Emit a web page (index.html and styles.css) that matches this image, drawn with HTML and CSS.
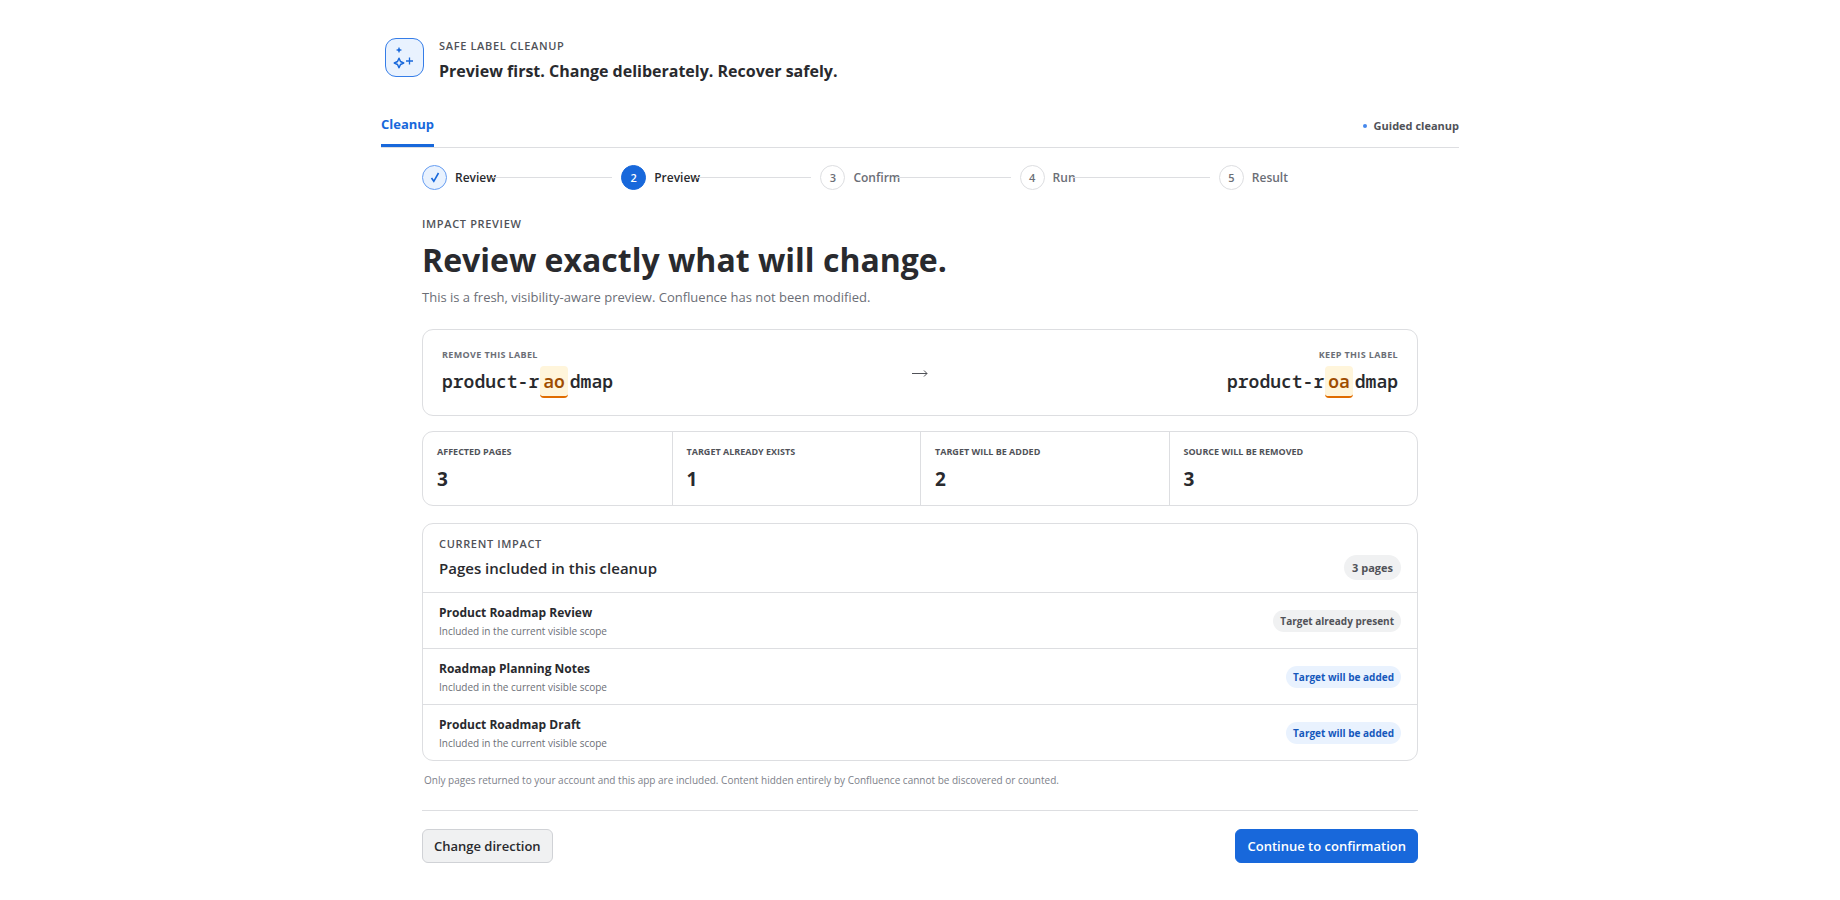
FILE: index.html
```
<!DOCTYPE html>
<html lang="en">
<head>
    <meta charset="UTF-8">
    <meta name="viewport" content="width=device-width, initial-scale=1.0">
    <title>Safe Label Cleanup</title>
    <link rel="stylesheet" href="styles.css">
</head>
<body>
    <div class="shell">
        <header class="app-header">
            <div class="app-icon">
                <svg width="23" height="23" viewBox="0 0 23 23" fill="none" stroke="currentColor" stroke-width="1.5" stroke-linejoin="round" aria-hidden="true">
                    <path d="M6 1.500l.8 1.700 1.700.8-1.700.8-.8 1.700-.8-1.700-1.700-.8 1.700-.8z" fill="currentColor" stroke="none"/>
                    <path d="M6 1.500v5M3.500 4h5" stroke-width="1"/>
                    <path d="M6 12.300l1.500 3.200 3.200 1.500-3.200 1.500L6 21.700l-1.500-3.200L1.300 17l3.200-1.500z"/>
                    <path d="M16.500 11.500v7M13 15h7" stroke-width="1.3"/>
                </svg>
            </div>
            <div>
                <p class="eyebrow">SAFE LABEL CLEANUP</p>
                <p class="app-title">Preview first. Change deliberately. Recover safely.</p>
            </div>
        </header>

        <nav class="tabs">
            <a class="tab" href="#cleanup">Cleanup</a>
            <span class="mode">Guided cleanup</span>
        </nav>

        <main class="content" id="cleanup">
            <ol class="steps">
                <li class="step done">
                    <span class="dot">
                        <svg width="10" height="11" viewBox="0 0 10 11" fill="none" stroke="currentColor" stroke-width="1.6" role="img" aria-label="Done"><path d="M1.500 6l2.300 3.300L8.500 1"/></svg>
                    </span>
                    <span>Review</span>
                </li>
                <li class="step current"><span class="dot">2</span><span>Preview</span></li>
                <li class="step"><span class="dot">3</span><span>Confirm</span></li>
                <li class="step"><span class="dot">4</span><span>Run</span></li>
                <li class="step"><span class="dot">5</span><span>Result</span></li>
            </ol>

            <p class="eyebrow">IMPACT PREVIEW</p>
            <h1>Review exactly what will change.</h1>
            <p class="lead">This is a fresh, visibility-aware preview. Confluence has not been modified.</p>

            <section class="card direction">
                <div>
                    <p class="caption">REMOVE THIS LABEL</p>
                    <code class="label-name">product-r<mark>ao</mark>dmap</code>
                </div>
                <svg class="arrow" width="16" height="10" viewBox="0 0 16 10" fill="none" stroke="currentColor" aria-hidden="true">
                    <path d="M0 5.500h15M12 2.500l3 3-3 3"/>
                </svg>
                <div class="keep">
                    <p class="caption">KEEP THIS LABEL</p>
                    <code class="label-name">product-r<mark>oa</mark>dmap</code>
                </div>
            </section>

            <dl class="card stats">
                <div class="stat"><dt>AFFECTED PAGES</dt><dd>3</dd></div>
                <div class="stat"><dt>TARGET ALREADY EXISTS</dt><dd>1</dd></div>
                <div class="stat"><dt>TARGET WILL BE ADDED</dt><dd>2</dd></div>
                <div class="stat"><dt>SOURCE WILL BE REMOVED</dt><dd>3</dd></div>
            </dl>

            <section class="card impact">
                <div class="impact-header">
                    <div>
                        <p class="eyebrow">CURRENT IMPACT</p>
                        <h2>Pages included in this cleanup</h2>
                    </div>
                    <span class="count">3 pages</span>
                </div>
                <ul class="pages">
                    <li class="page">
                        <div>
                            <h3>Product Roadmap Review</h3>
                            <p>Included in the current visible scope</p>
                        </div>
                        <span class="badge">Target already present</span>
                    </li>
                    <li class="page">
                        <div>
                            <h3>Roadmap Planning Notes</h3>
                            <p>Included in the current visible scope</p>
                        </div>
                        <span class="badge badge-info">Target will be added</span>
                    </li>
                    <li class="page">
                        <div>
                            <h3>Product Roadmap Draft</h3>
                            <p>Included in the current visible scope</p>
                        </div>
                        <span class="badge badge-info">Target will be added</span>
                    </li>
                </ul>
            </section>
            <p class="note">Only pages returned to your account and this app are included. Content hidden entirely by Confluence cannot be discovered or counted.</p>

            <div class="actions">
                <button type="button" class="btn">Change direction</button>
                <button type="button" class="btn btn-primary">Continue to confirmation</button>
            </div>
        </main>
    </div>
</body>
</html>
```
FILE: styles.css
```
* {
    box-sizing: border-box;
}

body {
    margin: 0;
    background: #fff;
    color: #292a2e;
    font-family: "Segoe UI", "Open Sans", "Noto Sans", sans-serif;
    font-size: 13px;
}

p, h1, h2, h3, ol, ul, dl, dd {
    margin: 0;
    padding: 0;
}

ol, ul {
    list-style: none;
}

.shell {
    max-width: 1078px;
    margin: 0 auto;
    padding: 36px 0;
}

.app-header {
    display: flex;
    gap: 15px;
    padding: 0 4px;
}

.app-icon {
    display: flex;
    align-items: center;
    justify-content: center;
    width: 39px;
    height: 39px;
    margin-top: 2px;
    border: 1px solid #357de8;
    border-radius: 11px;
    background: #e9f2fe;
    color: #1868db;
}

.eyebrow {
    color: #505258;
    font-size: 11px;
    font-weight: 600;
    line-height: 20px;
    letter-spacing: 0.06em;
}

.app-title {
    margin-top: 2px;
    font-size: 16px;
    font-weight: 700;
    line-height: 26px;
}

.tabs {
    display: flex;
    align-items: flex-end;
    justify-content: space-between;
    margin-top: 30px;
    border-bottom: 1px solid #dddee1;
}

.tab {
    padding-bottom: 10px;
    border-bottom: 3px solid #1868db;
    color: #1868db;
    font-weight: 700;
    line-height: 20px;
    text-decoration: none;
}

.mode {
    display: flex;
    align-items: center;
    gap: 7px;
    padding-bottom: 12px;
    color: #505258;
    font-size: 11px;
    font-weight: 700;
    line-height: 18px;
}

.mode::before {
    content: "";
    width: 4px;
    height: 4px;
    border-radius: 50%;
    background: #4688ec;
}

.content {
    padding: 17px 41px 0;
}

.steps {
    display: grid;
    grid-template-columns: repeat(5, 1fr);
    margin-bottom: 24px;
}

.step {
    display: flex;
    align-items: center;
    gap: 8px;
    color: #6b6e76;
    font-size: 12px;
    font-weight: 600;
}

/* connector to the next step, starts just under the end of the label */
.step:not(:last-child)::after {
    content: "";
    flex: 1;
    height: 1px;
    margin: 0 9px 0 -12px;
    background: #dddee1;
}

.dot {
    display: flex;
    align-items: center;
    justify-content: center;
    width: 25px;
    height: 25px;
    border: 1px solid #dddee1;
    border-radius: 50%;
    background: #fff;
    font-size: 11px;
}

.done .dot {
    border-color: #669df1;
    background: #e9f2fe;
    color: #1868db;
}

.current .dot {
    border-color: #1868db;
    background: #1868db;
    color: #fff;
}

.done,
.current {
    color: #292a2e;
}

h1 {
    margin-top: 4px;
    font-size: 32px;
    font-weight: 700;
    line-height: 44px;
}

.lead {
    margin-top: 4px;
    color: #6b6e76;
    line-height: 22px;
}

.card {
    border: 1px solid #dddee1;
    border-radius: 11px;
    background: #fff;
}

.direction {
    display: grid;
    grid-template-columns: 1fr auto 1fr;
    align-items: center;
    margin-top: 21px;
    padding: 17px 19px;
}

.keep {
    text-align: right;
}

.caption {
    color: #6b6e76;
    font-size: 9px;
    font-weight: 700;
    line-height: 16px;
    letter-spacing: 0.04em;
}

.label-name {
    display: block;
    margin-top: 1px;
    font-family: Consolas, "Noto Sans Mono", "DejaVu Sans Mono", monospace;
    font-size: 18px;
    font-weight: 600;
    line-height: 34px;
}

.label-name mark {
    margin: 0 2px 0 1px;
    padding: 3px;
    border-bottom: 2px solid #e06c00;
    border-radius: 4px;
    background: #fff5db;
    color: #9e4c00;
}

.arrow {
    color: #505258;
}

.stats {
    display: grid;
    grid-template-columns: repeat(4, 1fr);
    margin: 15px 0 17px;
}

.stat {
    padding: 12px 14px 11px;
}

.stat + .stat {
    border-left: 1px solid #dddee1;
}

.stat dt {
    color: #505258;
    font-size: 9px;
    font-weight: 700;
    line-height: 16px;
}

.stat dd {
    margin-top: 5px;
    font-size: 19px;
    font-weight: 700;
    line-height: 29px;
}

.impact-header,
.page {
    display: flex;
    align-items: center;
    justify-content: space-between;
    padding: 0 16px;
}

.impact-header {
    align-items: flex-end;
    padding-top: 10px;
    padding-bottom: 12px;
}

h2 {
    margin-top: 3px;
    font-size: 15px;
    font-weight: 600;
    line-height: 23px;
}

.count {
    padding: 0 8px;
    border-radius: 13px;
    background: #f0f1f2;
    color: #505258;
    font-size: 11px;
    font-weight: 700;
    line-height: 25px;
}

.page {
    padding-top: 10px;
    padding-bottom: 9px;
    border-top: 1px solid #dddee1;
}

h3 {
    font-size: 12px;
    font-weight: 700;
    line-height: 20px;
}

.page p {
    color: #6b6e76;
    font-size: 10px;
    line-height: 16px;
}

.badge {
    padding: 0 7px;
    border-radius: 11px;
    background: #f0f1f2;
    color: #505258;
    font-size: 10px;
    font-weight: 700;
    line-height: 22px;
}

.badge-info {
    background: #e9f2fe;
    color: #1558bc;
}

.note {
    margin-top: 11px;
    padding: 0 2px;
    color: #7d818a;
    font-size: 10px;
    line-height: 16px;
}

.actions {
    display: flex;
    justify-content: space-between;
    margin-top: 22px;
    padding-top: 18px;
    border-top: 1px solid #dddee1;
}

.btn {
    padding: 0 11px;
    border: 1px solid #d0d2d6;
    border-radius: 6px;
    background: #f0f1f2;
    color: #292a2e;
    font-family: inherit;
    font-size: 13px;
    font-weight: 600;
    line-height: 32px;
    cursor: pointer;
}

.btn-primary {
    border-color: #1868db;
    background: #1868db;
    color: #fff;
}
```
